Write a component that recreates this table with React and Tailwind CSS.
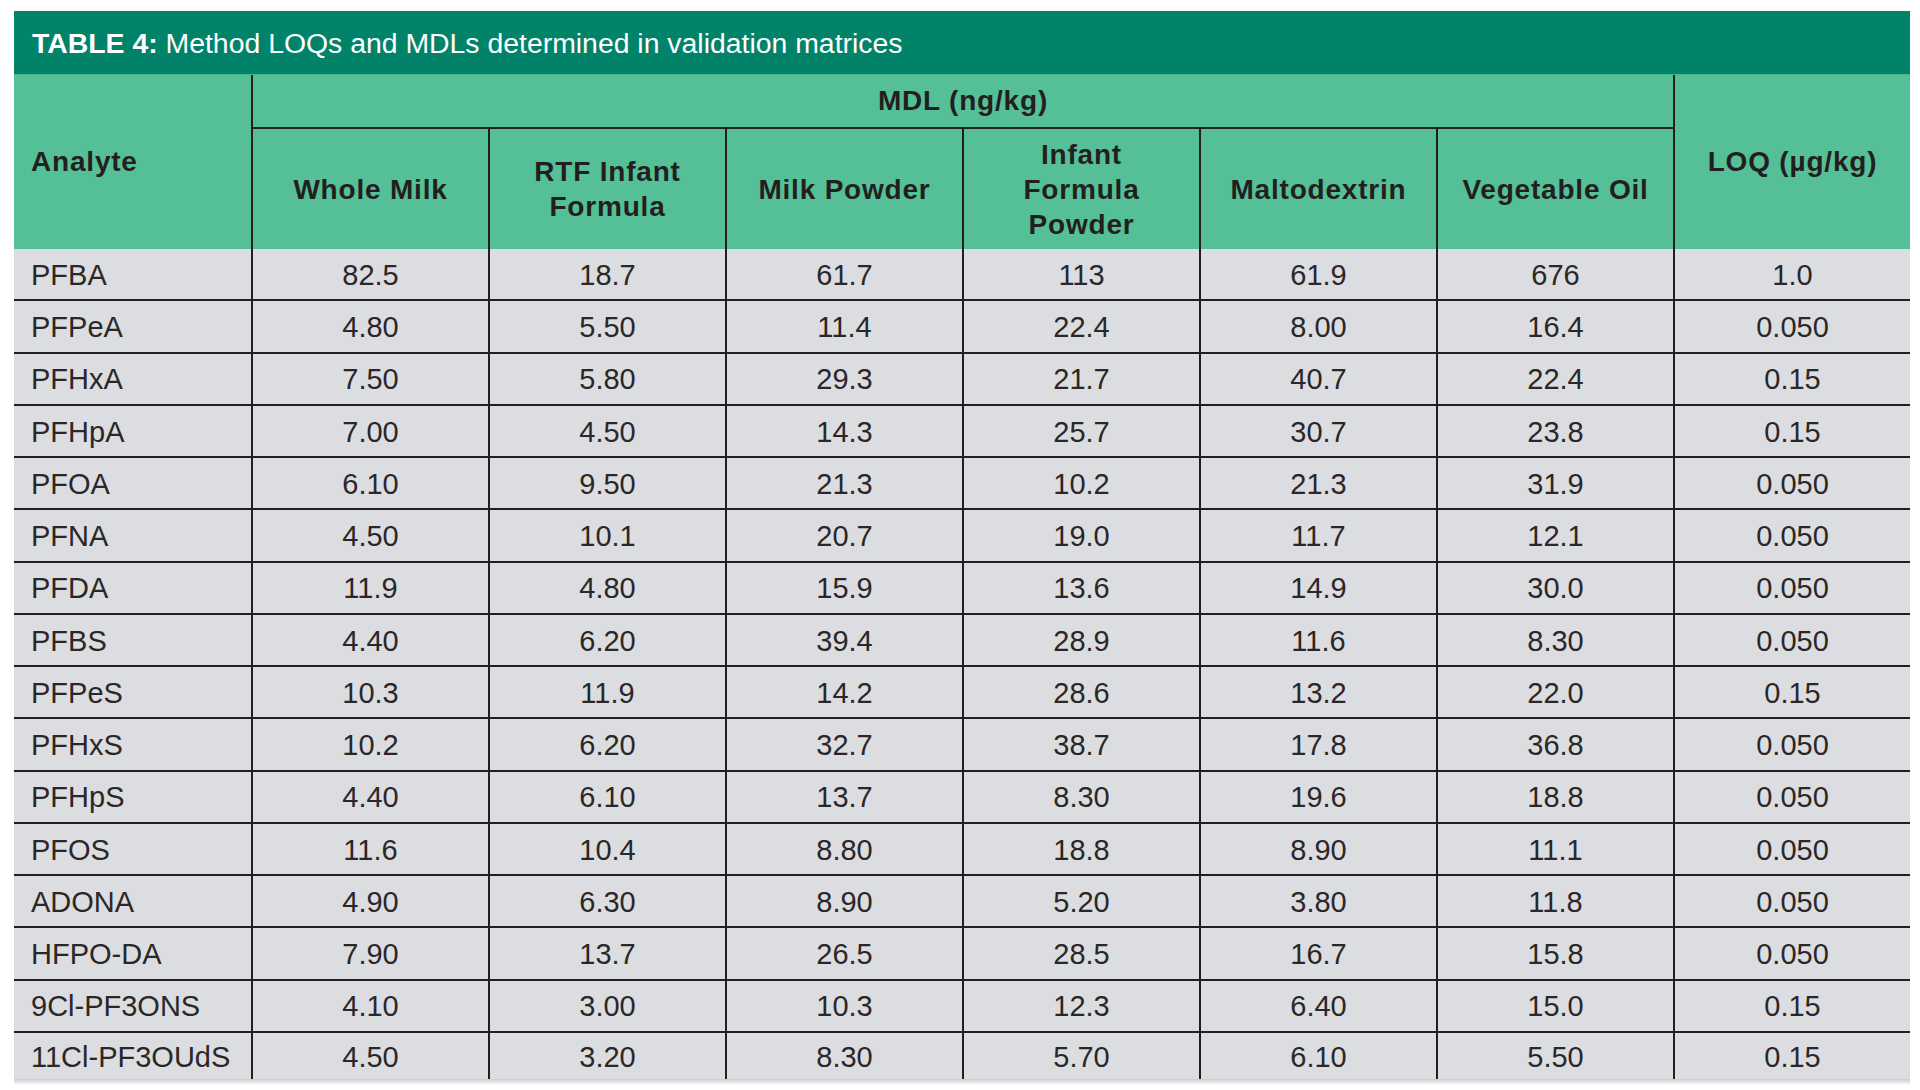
import React from 'react';

const columns = [
  ['Whole Milk'],
  ['RTF Infant', 'Formula'],
  ['Milk Powder'],
  ['Infant', 'Formula', 'Powder'],
  ['Maltodextrin'],
  ['Vegetable Oil'],
];

const rows = [
  ['PFBA', '82.5', '18.7', '61.7', '113', '61.9', '676', '1.0'],
  ['PFPeA', '4.80', '5.50', '11.4', '22.4', '8.00', '16.4', '0.050'],
  ['PFHxA', '7.50', '5.80', '29.3', '21.7', '40.7', '22.4', '0.15'],
  ['PFHpA', '7.00', '4.50', '14.3', '25.7', '30.7', '23.8', '0.15'],
  ['PFOA', '6.10', '9.50', '21.3', '10.2', '21.3', '31.9', '0.050'],
  ['PFNA', '4.50', '10.1', '20.7', '19.0', '11.7', '12.1', '0.050'],
  ['PFDA', '11.9', '4.80', '15.9', '13.6', '14.9', '30.0', '0.050'],
  ['PFBS', '4.40', '6.20', '39.4', '28.9', '11.6', '8.30', '0.050'],
  ['PFPeS', '10.3', '11.9', '14.2', '28.6', '13.2', '22.0', '0.15'],
  ['PFHxS', '10.2', '6.20', '32.7', '38.7', '17.8', '36.8', '0.050'],
  ['PFHpS', '4.40', '6.10', '13.7', '8.30', '19.6', '18.8', '0.050'],
  ['PFOS', '11.6', '10.4', '8.80', '18.8', '8.90', '11.1', '0.050'],
  ['ADONA', '4.90', '6.30', '8.90', '5.20', '3.80', '11.8', '0.050'],
  ['HFPO-DA', '7.90', '13.7', '26.5', '28.5', '16.7', '15.8', '0.050'],
  ['9Cl-PF3ONS', '4.10', '3.00', '10.3', '12.3', '6.40', '15.0', '0.15'],
  ['11Cl-PF3OUdS', '4.50', '3.20', '8.30', '5.70', '6.10', '5.50', '0.15'],
];

const headFont = "font-['Liberation_Sans',Arial,sans-serif] font-bold text-[28px] tracking-[0.8px] text-[#231f20]";

export default function App() {
  return (
    <div className="min-h-[1090px] bg-white pt-[11px] pl-[14px]">
      <div className="w-[1896px]">
        {/* Title bar */}
        <div className="h-[63px] bg-[#01836a] flex items-center pl-[18px] pt-[1px] text-white text-[28.4px] font-['Liberation_Sans',Arial,sans-serif] whitespace-pre">
          <span className="font-bold">TABLE 4: </span>
          <span>Method LOQs and MDLs determined in validation matrices</span>
        </div>

        {/* Header */}
        <div className="grid grid-cols-[repeat(8,237px)] bg-[#55bf97] border-t border-[#4bb58d]">
          <div className={`row-span-2 h-[174px] flex items-center pl-[17px] ${headFont}`}>Analyte</div>
          <div className={`col-span-6 h-[54px] border-l-2 border-b-2 border-[#231f20] flex items-center justify-center ${headFont}`}>
            MDL (ng/kg)
          </div>
          <div className={`row-span-2 border-l-2 border-[#231f20] flex items-center justify-center ${headFont}`}>
            LOQ (µg/kg)
          </div>
          {columns.map((lines, i) => (
            <div
              key={i}
              className={`h-[120px] border-l-2 border-[#231f20] flex flex-col items-center justify-center text-center leading-[35px] ${headFont}`}
            >
              {lines.map((l) => (
                <span key={l}>{l}</span>
              ))}
            </div>
          ))}
        </div>

        {/* Data rows */}
        <div className="bg-[#dcdde0]">
          {rows.map((row, r) => (
            <div
              key={row[0]}
              className={`grid grid-cols-[repeat(8,237px)] ${
                r === rows.length - 1 ? 'h-[46px]' : 'h-[52.25px] border-b-2 border-[#231f20]'
              }`}
            >
              {row.map((cell, c) => (
                <div
                  key={c}
                  className={`flex items-center pt-[3px] text-[29px] text-[#2b2728] font-['Liberation_Sans',Arial,sans-serif] ${
                    c === 0 ? 'pl-[17px]' : 'justify-center border-l-2 border-[#231f20]'
                  }`}
                >
                  {cell}
                </div>
              ))}
            </div>
          ))}
        </div>
        <div className="h-[6px] bg-gradient-to-b from-[#c9cacc] to-white" />
      </div>
    </div>
  );
}
